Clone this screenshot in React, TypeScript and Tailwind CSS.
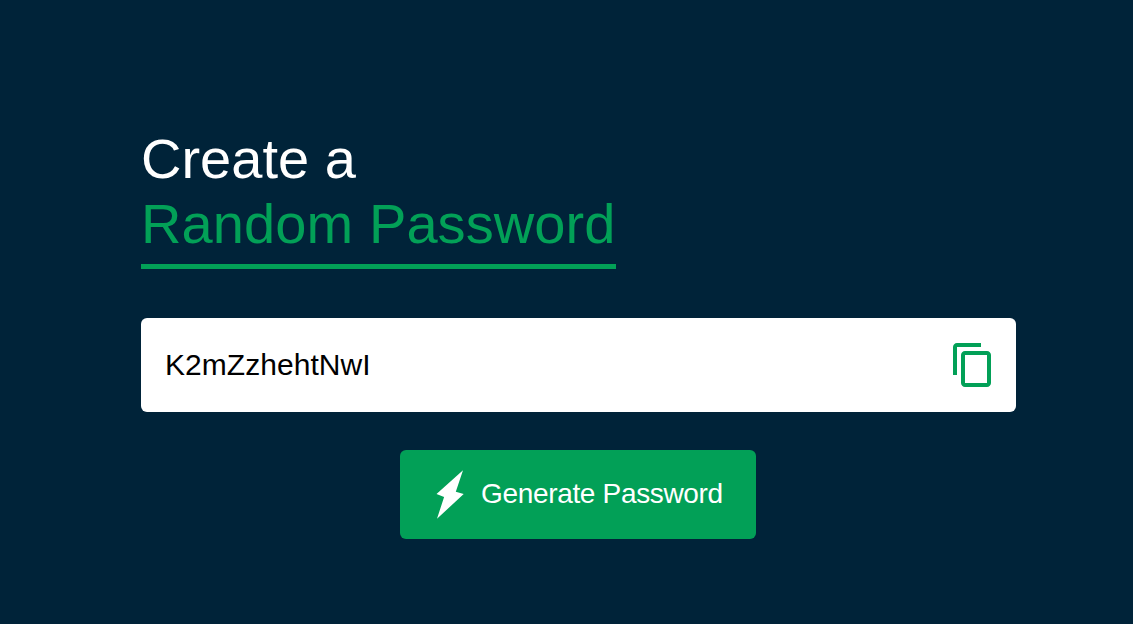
export default function App() {
  return (
    <main className="flex h-[624px] w-full flex-col overflow-hidden bg-[#002339] pl-[141px] pt-[126px] font-['Liberation_Sans',Arial,sans-serif]">
      <h1 className="flex flex-col items-start text-[56px] leading-[65px] tracking-[0.1px] text-white">
        <span className="tracking-normal">Create a</span>
        <span className="h-[78px] whitespace-nowrap border-b-[5px] border-[#02a057] text-[#02a057]">Random Password</span>
      </h1>
      <div className="mt-[49px] flex h-[94px] w-[875px] shrink-0 items-center justify-between rounded-md bg-white pl-[24px] pr-[25px]">
        <span className="pb-[1px] text-[30px] tracking-[0.05px] text-black">K2mZzhehtNwI</span>
        <svg className="h-[44px] w-[38px]" viewBox="2 1 19 22" fill="#02a057" preserveAspectRatio="none">
          <path d="M16 1H4c-1.1 0-2 .9-2 2v14h2V3h12V1zm3 4H8c-1.1 0-2 .9-2 2v14c0 1.1.9 2 2 2h11c1.1 0 2-.9 2-2V7c0-1.1-.9-2-2-2zm0 16H8V7h11v14z" />
        </svg>
      </div>
      <button className="ml-[259px] mt-[38px] flex h-[89px] w-[356px] shrink-0 items-center rounded-md bg-[#02a057] pl-[36px] text-[28px] text-white">
        <svg className="h-[49px] w-[28px] shrink-0" viewBox="0 0 28 49" fill="white">
          <path d="M27 .3.5 24l7.6 2.9L1 48.8 27.7 24l-7.9-2.3z" />
        </svg>
        <span className="ml-[17px] whitespace-nowrap pb-[2px] tracking-[-0.33px]">Generate Password</span>
      </button>
    </main>
  );
}
